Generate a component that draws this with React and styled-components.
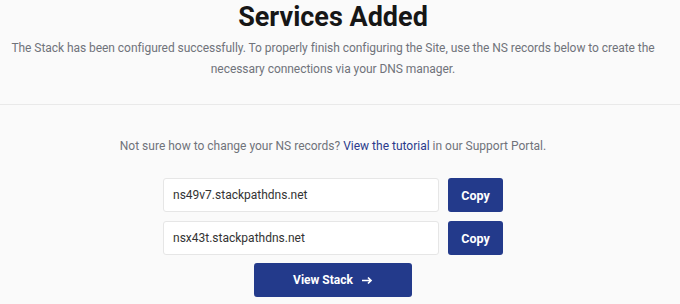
import React from 'react'
import styled, { createGlobalStyle } from 'styled-components'

const GlobalStyle = createGlobalStyle`
  body {
    margin: 0;
    background-color: #fafafa;
    font-family: Roboto, "Liberation Sans", Arial, sans-serif;
  }
`

const records = ['ns49v7.stackpathdns.net', 'nsx43t.stackpathdns.net']

const App = () => {
  return (
    <>
      <GlobalStyle />
      <Page>
        <Header>
          <Title>Services Added</Title>
          <Lead>
            The Stack has been configured successfully. To properly finish configuring the Site, use the NS records below to create the necessary connections via your DNS manager.
          </Lead>
        </Header>
        <Body>
          <Help>
            Not sure how to change your NS records? <Link href="#">View the tutorial</Link> in our Support Portal.
          </Help>
          <Records>
            <List>
              {records.map((r) => (
                <Row key={r}>
                  <Field readOnly value={r} />
                  <CopyButton>Copy</CopyButton>
                </Row>
              ))}
            </List>
            <ViewButton>
              View Stack
              <svg width="11" height="9" viewBox="0 0 11 9">
                <path d="M0 4.5h8.5M6 1.5l3 3-3 3" fill="none" stroke="#fff" strokeWidth="1.7" />
              </svg>
            </ViewButton>
          </Records>
        </Body>
      </Page>
    </>
  )
}

export default App

const Page = styled.div`
  width: 680px;
  height: 304px;
  overflow: hidden;
`
const Header = styled.div`
  padding: 0 14px 24px 0;
  border-bottom: 1px solid #e9e9e9;
  display: flex;
  flex-direction: column;
  align-items: center;
`
const Title = styled.h1`
  margin: 0;
  font-size: 27px;
  line-height: 34px;
  font-weight: 700;
  color: #161616;
`
const Lead = styled.p`
  margin: 4px 0 0;
  width: 660px;
  text-align: center;
  font-size: 12px;
  line-height: 21px;
  letter-spacing: -0.05px;
  color: #70737a;
`
const Body = styled.div`
  padding: 31px 14px 0 0;
  display: flex;
  flex-direction: column;
  align-items: center;
`
const Help = styled.div`
  font-size: 12px;
  line-height: 20px;
  color: #70737a;
`
const Link = styled.a`
  color: #2a3a8c;
  text-decoration: none;
`
const Records = styled.div`
  margin-top: 22px;
  width: 340px;
  display: flex;
  flex-direction: column;
  align-items: center;
  gap: 8px;
`
const List = styled.div`
  width: 100%;
  display: flex;
  flex-direction: column;
  gap: 9px;
`
const Row = styled.div`
  display: flex;
  gap: 9px;
`
const Field = styled.input`
  flex: 1;
  box-sizing: border-box;
  height: 34px;
  padding: 0 9px;
  border: 1px solid #e6e6e6;
  border-radius: 3px;
  background-color: #fff;
  font-family: Roboto, "Liberation Sans", Arial, sans-serif;
  font-size: 12px;
  color: #333;
  outline: none;
`
const CopyButton = styled.button`
  width: 55px;
  height: 34px;
  border: 0;
  border-radius: 3px;
  background-color: #233a8b;
  color: #fff;
  font-family: Roboto, "Liberation Sans", Arial, sans-serif;
  font-size: 12.5px;
  font-weight: 700;
`
const ViewButton = styled.button`
  width: 158px;
  height: 34px;
  display: flex;
  align-items: center;
  justify-content: center;
  gap: 9px;
  border: 0;
  border-radius: 3px;
  background-color: #233a8b;
  color: #fff;
  font-family: Roboto, "Liberation Sans", Arial, sans-serif;
  font-size: 12px;
  font-weight: 700;
`
